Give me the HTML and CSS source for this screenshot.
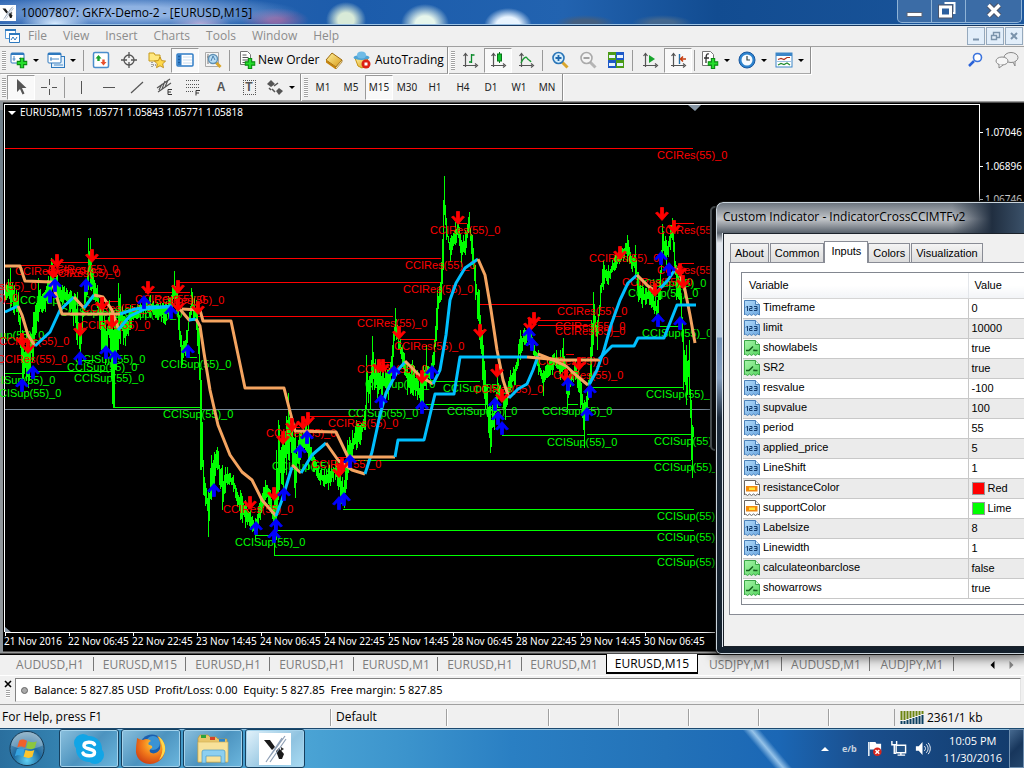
FILE: index.html
```html
<!DOCTYPE html>
<html lang="en">
<head>
<meta charset="utf-8">
<title>10007807: GKFX-Demo-2 - [EURUSD,M15]</title>
<link rel="stylesheet" href="styles.css">
</head>
<body>
<svg class="sprite" aria-hidden="true">
  <defs>
    <linearGradient id="gGold" x2="1" y2="1"><stop offset="0" stop-color="#fff2a0"/><stop offset="1" stop-color="#d89a16"/></linearGradient>
    <linearGradient id="gPage" x2="1" y2="1"><stop offset="0" stop-color="#b4dcfb"/><stop offset="1" stop-color="#6ba6df"/></linearGradient>
    <linearGradient id="gGreen" x2="1" y2="1"><stop offset="0" stop-color="#a9f5ab"/><stop offset="1" stop-color="#56d45f"/></linearGradient>
    <radialGradient id="gOrb" cx=".5" cy=".85" r=".8"><stop offset="0" stop-color="#5fd0f4"/><stop offset=".5" stop-color="#1c69a0"/><stop offset="1" stop-color="#6f9cb8"/></radialGradient>
    <radialGradient id="gFox" cx=".6" cy=".3" r=".8"><stop offset="0" stop-color="#ffcf3a"/><stop offset=".5" stop-color="#f27a1a"/><stop offset="1" stop-color="#c93612"/></radialGradient>
    <symbol id="plus" viewBox="0 0 10 10"><path d="M3.500.5h3v3h3v3h-3v3h-3v-3h-3v-3h3z" fill="#25dd2b" stroke="#0a8a12"/></symbol>
    <symbol id="newchart" viewBox="0 0 18 18"><rect x="1" y="2" width="13" height="10" rx="1" fill="#fff" stroke="#2e79be"/><path d="M1 3h13" stroke="#2e79be" stroke-width="2"/><path d="M4 5v5M2.500 8h3M9 8l1-1 2 1" stroke="#4a8cc8" fill="none"/><use href="#plus" x="6.500" y="6.500" width="11" height="11"/></symbol>
    <symbol id="profiles" viewBox="0 0 18 18"><rect x="4.500" y="5.500" width="13" height="11" fill="#e5f1fb" stroke="#2e79be"/><rect x="1" y="2" width="13" height="10" rx="1" fill="#fff" stroke="#2e79be"/><path d="M1 3h13" stroke="#2e79be" stroke-width="2"/><path d="M3 8h9M4 6v4M7 14h9" stroke="#4a8cc8"/></symbol>
    <symbol id="market" viewBox="0 0 18 18"><rect x="1.500" y="1.500" width="15" height="15" rx="1.500" fill="#fff" stroke="#4a8dcc" stroke-width="1.500"/><path d="M6.500 4l3 3.500H7.700v2.500H5.300V7.500H3.500z" fill="#18a22b"/><path d="M11.500 14.500l-3-3.500h1.800V8.500h2.400V11h1.800z" fill="#e8502c"/></symbol>
    <symbol id="target" viewBox="0 0 18 18"><circle cx="9" cy="9" r="5" fill="none" stroke="#555" stroke-width="1.300"/><path d="M9 1v6M9 11v6M1 9h6M11 9h6" stroke="#555" stroke-width="1.300"/></symbol>
    <symbol id="navigator" viewBox="0 0 18 18"><path d="M1 2h5l1 2h5v6H1z" fill="#ffe880" stroke="#c69a1a"/><path d="M4 11v5M5 14h3" stroke="#555" stroke-dasharray="1 1"/><path d="M12 6l1.700 3.600 3.900.5-2.900 2.700.8 3.900-3.500-1.900-3.500 1.900.8-3.900-2.900-2.700 3.900-.5z" fill="#ffd94a" stroke="#b8820a" stroke-width=".8"/></symbol>
    <symbol id="terminal" viewBox="0 0 18 18"><rect x="1" y="3" width="16" height="12" rx="1" fill="#fff" stroke="#2f7cc6" stroke-width="1.500"/><rect x="1.500" y="3.500" width="4" height="11" fill="#2f7cc6"/><path d="M3 5v9" stroke="#113b70" stroke-dasharray="1 2"/><path d="M7 6h9M7 9h9M7 12h9" stroke="#c8ddf0"/></symbol>
    <symbol id="tester" viewBox="0 0 18 18"><path d="M1.500 1.500h13v14h-13z" fill="#f4f4f4" stroke="#aaa"/><path d="M4 3v10M3 6h6" stroke="#777"/><path d="M11.500 11l5 5" stroke="#d9a62d" stroke-width="3"/><circle cx="9" cy="8" r="4.500" fill="#b9def5" stroke="#5f91b5" stroke-width="1.400"/><path d="M7 10l2-5 2 4" fill="none" stroke="#4a7fae"/></symbol>
    <symbol id="order" viewBox="0 0 18 18"><path d="M2.500.5h7l3 3v10h-10z" fill="#fff" stroke="#777"/><path d="M4.500 4h4M4.500 6.500h6M4.500 9h6M4.500 11.500h4" stroke="#555"/><use href="#plus" x="6.500" y="7" width="11" height="11"/></symbol>
    <symbol id="book" viewBox="0 0 18 18"><path d="M7 2l10 7-6 7L1 9z" fill="url(#gGold)" stroke="#9c6a10"/><path d="M1 9v2.500l10 7V16z" fill="#c4820c"/><path d="M11 16l6-7v2l-6 7" fill="#fff3c0" stroke="#9c6a10" stroke-width=".7"/></symbol>
    <symbol id="auto" viewBox="0 0 18 18"><path d="M2 7h13l-3 8-3 2-4-2z" fill="url(#gGold)" stroke="#c9940f"/><ellipse cx="8.500" cy="6.500" rx="8" ry="2.500" fill="#4da3d6"/><ellipse cx="8.500" cy="4" rx="4.500" ry="3.500" fill="#6fbbe6"/><circle cx="13" cy="13" r="4.500" fill="#dc1f12"/><rect x="11.500" y="11.500" width="3" height="3" fill="#fff"/></symbol>
    <symbol id="axes" viewBox="0 0 18 18"><path d="M4.500 3v13M2 14.500h13M2.500 5l2-2.500 2 2.500M14 12.500l2.500 2-2.500 2" fill="none" stroke="#555" stroke-width="1.200"/></symbol>
    <symbol id="bars" viewBox="0 0 18 18"><use href="#axes"/><path d="M10.500 3v9M10.500 4h3M8 11h2.500" stroke="#0a8a2a" stroke-width="1.300"/></symbol>
    <symbol id="candles" viewBox="0 0 18 18"><use href="#axes"/><path d="M10.500 1v11" stroke="#08741b"/><rect x="8.500" y="3" width="4" height="7" fill="#13c52e" stroke="#08741b"/></symbol>
    <symbol id="line" viewBox="0 0 18 18"><use href="#axes"/><path d="M4 12c2-5 5-7 6-5s3 2 4 4" fill="none" stroke="#1d9a35" stroke-width="1.300"/></symbol>
    <symbol id="zoomin" viewBox="0 0 18 18"><path d="M11 11l5.500 5.500" stroke="#d9a62d" stroke-width="3"/><circle cx="7.500" cy="7" r="5.500" fill="#d6eefc" stroke="#2b76b8" stroke-width="1.600"/><path d="M4.500 7h6M7.500 4v6" stroke="#2069ad" stroke-width="1.800"/></symbol>
    <symbol id="zoomout" viewBox="0 0 18 18"><path d="M11 11l5.500 5.500" stroke="#b5b5b5" stroke-width="3"/><circle cx="7.500" cy="7" r="5.500" fill="#f4f4f4" stroke="#aaa" stroke-width="1.600"/><path d="M4.500 7h6" stroke="#999" stroke-width="1.800"/></symbol>
    <symbol id="tile" viewBox="0 0 18 18"><path d="M1 1h8v8H1zM9 9h8v8H9z" fill="#4b9b18"/><path d="M9 1h8v8H9zM1 9h8v8H1z" fill="#1d59c8"/><path d="M2 4h6v3H2zM10 4h6v3h-6zM2 12h6v3H2zM10 12h6v3h-6z" fill="#e6f3ff"/></symbol>
    <symbol id="scroll" viewBox="0 0 18 18"><use href="#axes"/><path d="M8 4l6 4-6 4z" fill="#18a52d"/></symbol>
    <symbol id="shift" viewBox="0 0 18 18"><use href="#axes"/><path d="M10.500 3v10" stroke="#236ea7" stroke-width="1.400"/><path d="M17 8h-5M14 5.500L11.500 8l2.500 2.500" fill="none" stroke="#c63b0c" stroke-width="1.500"/></symbol>
    <symbol id="indicators" viewBox="0 0 18 18"><path d="M1.500.5h8l3 3v11h-11z" fill="#fff" stroke="#777"/><path d="M8 3c-3-1-3 2-3 9M3 7h5" fill="none" stroke="#333" stroke-width="1.300"/><use href="#plus" x="6.500" y="7" width="11" height="11"/></symbol>
    <symbol id="clock" viewBox="0 0 18 18"><circle cx="9" cy="9" r="8" fill="#2d84cf" stroke="#1a579e"/><circle cx="9" cy="9" r="5.500" fill="#f7fbff"/><path d="M9 5v4h3" fill="none" stroke="#344" stroke-width="1.200"/></symbol>
    <symbol id="template" viewBox="0 0 18 18"><rect x="1" y="2" width="16" height="14" fill="#fff" stroke="#3c86c8"/><path d="M1 3.500h16" stroke="#3c86c8" stroke-width="3"/><path d="M3 8.500l3-1 3 1 3-2h3" fill="none" stroke="#b1301b" stroke-width="1.200"/><path d="M2 10.500h14" stroke="#9cc0e0"/><path d="M3 14l3-1.500 3 1 3-1.500 3 2" fill="none" stroke="#1f8a2d" stroke-width="1.200"/></symbol>
    <symbol id="search" viewBox="0 0 18 18"><path d="M7 10l-5 5" stroke="#2a62d8" stroke-width="2.500"/><circle cx="10.500" cy="6.500" r="4" fill="#fff" stroke="#3b73dd" stroke-width="1.600"/></symbol>
    <symbol id="chat" viewBox="0 0 24 18"><ellipse cx="16" cy="6.500" rx="7" ry="5" fill="#eee" stroke="#888"/><path d="M18 11l2 4v-5" fill="#eee" stroke="#888"/><ellipse cx="7" cy="10" rx="6" ry="4" fill="#f6f6f6" stroke="#888"/><path d="M4 13v4l4-3" fill="#f6f6f6" stroke="#888"/></symbol>
    <symbol id="cursor" viewBox="0 0 18 18"><path d="M5 1v13l3-3 2.500 5.500 2-1L10 10h4.500z" fill="#555"/></symbol>
    <symbol id="cross" viewBox="0 0 18 18"><path d="M9.500 1v6M9.500 11v6M1 9.500h6M12 9.500h5" stroke="#555" stroke-width="1"/></symbol>
    <symbol id="vline" viewBox="0 0 18 18"><path d="M9.500 3v13" stroke="#555"/></symbol>
    <symbol id="hline" viewBox="0 0 18 18"><path d="M3 9.500h12" stroke="#555"/></symbol>
    <symbol id="trend" viewBox="0 0 18 18"><path d="M3 15L15 4" stroke="#555" stroke-width="1.200"/></symbol>
    <symbol id="channel" viewBox="0 0 18 18"><path d="M1 10L14 1M2 14L15 5M3 12l3-6M6 11l3-8M9 9l3-7" stroke="#555" stroke-width="1.200"/><path d="M16 11.500h-4v5h4M12 14h3" fill="none" stroke="#333"/></symbol>
    <symbol id="fibo" viewBox="0 0 18 18"><path d="M2 2.500h14M2 6.500h14M2 9.500h14M2 13.500h8" stroke="#555" stroke-dasharray="1 1"/><path d="M16 12.500h-4v5M12 15h3" fill="none" stroke="#333"/></symbol>
    <symbol id="objects" viewBox="0 0 18 18"><path d="M1 6l4-4 4 4-4 3zM10 13l3-3 4 3-4 4z" fill="#555"/><path d="M3 10l2 2M8 8l4-3M6 11l3 3" stroke="#555" fill="none" stroke-width="1.500"/></symbol>
    <symbol id="p-int" viewBox="0 0 16 16"><path d="M.5.5h11l4 4V15l-2-1-2 1.500-2-1.500-2 1.500L5.500 14l-2 1.500L1.500 14l-1 1z" fill="url(#gPage)" stroke="#4a80b8"/><path d="M11.500.5v4h4" fill="#dff0fd" stroke="#4a80b8"/><path d="M2 7.500L3.500 6v5M5.500 6.500H8v2H5.500v2H8.500M10 6.500h3v4h-3M10.500 8.500H13" fill="none" stroke="#153f70"/></symbol>
    <symbol id="p-bool" viewBox="0 0 16 16"><path d="M.5.5h11l4 4V15l-2-1-2 1.500-2-1.500-2 1.500L5.500 14l-2 1.500L1.500 14l-1 1z" fill="url(#gGreen)" stroke="#3aa546"/><path d="M11.500.5v4h4" fill="#d9fbd9" stroke="#3aa546"/><path d="M2 10.500h3l4-4M10 9.500v1h3.500" fill="none" stroke="#14601d" stroke-width="1.500"/></symbol>
    <symbol id="p-color" viewBox="0 0 16 16"><path d="M.5.500h11l4 4V15l-2-1-2 1.500-2-1.500-2 1.500L5.500 14l-2 1.500L1.500 14l-1 1z" fill="#fff" stroke="#666"/><path d="M11.500.5v4h4" fill="#eee" stroke="#666"/><rect x="2" y="6" width="11.500" height="5.500" fill="#f28a10"/><rect x="5" y="7.500" width="6" height="2.500" fill="#ffe53a"/></symbol>
    <symbol id="logo" viewBox="0 0 32 32"><path d="M0 0h32v32H0z" fill="#fff"/><path d="M5 7h6l5 7-3 3zM17 18l3-3 5 6-2 5h-3z" fill="#1b1b1b"/><path d="M26 3L9 26M23 5L7 29M27 6L11 29" stroke="#8fa0b6" stroke-width="1.200"/><path d="M22 14l3 2-3 2" fill="#333"/></symbol>
    <path id="down" d="M-1.500-6.500h3V1L4.500-2 6.500-1 0 6.500-6.500-1-4.500-2-1.500 1z" fill="#f00" stroke="#f00" stroke-width=".8"/>
    <path id="up" d="M-1.500 6.500h3V-1L4.500 2 6.500 1 0-6.500-6.500 1-4.500 2-1.500-1z" fill="#00f" stroke="#00f" stroke-width=".8"/>
  </defs>
</svg>

<div class="screen">
  <header class="titlebar">
    <svg class="i16"><use href="#logo"/></svg>
    <h1 class="title">10007807: GKFX-Demo-2 - [EURUSD,M15]</h1>
    <div class="winbtns">
      <button aria-label="Minimize"><svg viewBox="0 0 32 22"><rect x="8.500" y="12.500" width="15" height="4" fill="#fff" stroke="#5a6478"/></svg></button>
      <button aria-label="Restore"><svg viewBox="0 0 32 22"><path d="M12 3h10v10h-3" fill="none" stroke="#fff" stroke-width="2"/><path d="M8 7h10v9H8z" fill="none" stroke="#4b556a" stroke-width="5"/><path d="M8 7h10v9H8z" fill="#2b5f9f" stroke="#fff" stroke-width="3"/></svg></button>
      <button class="wclose" aria-label="Close"><svg viewBox="0 0 54 22"><path d="M22 5l11 11M33 5L22 16" stroke="#4b556a" stroke-width="5.500"/><path d="M22 5l11 11M33 5L22 16" stroke="#fff" stroke-width="3.500"/></svg></button>
    </div>
  </header>

  <nav class="menubar">
    <svg class="i16" viewBox="0 0 16 16"><path d="M1.500 1.500h10v9h-10z" fill="#fff" stroke="#5a9bd8"/><path d="M5.500 5.500h10v9h-10z" fill="#fff" stroke="#2e79be"/><path d="M1 2h11M5 6h11" stroke="#2e79be" stroke-width="2"/><path d="M7 12l2-3 2 3 2-3" fill="none" stroke="#2e79be"/></svg>
    <button>File</button><button>View</button><button>Insert</button><button>Charts</button><button>Tools</button><button>Window</button><button>Help</button>
    <div class="mdi">
      <button aria-label="Minimize chart"><svg viewBox="0 0 16 16"><path d="M5 11.500h6" stroke="#7b93ab" stroke-width="2"/></svg></button>
      <button aria-label="Restore chart"><svg viewBox="0 0 16 16"><path d="M6.500 7V4.500h6v5H10M4.500 7.500h5v4h-5z" fill="none" stroke="#7b93ab" stroke-width="1.400"/></svg></button>
      <button aria-label="Close chart"><svg viewBox="0 0 16 16"><path d="M5 5l6 6M11 5l-6 6" stroke="#7b93ab" stroke-width="2"/></svg></button>
    </div>
  </nav>

  <div class="toolrow">
    <div class="toolbar">
      <span class="grip"></span>
      <button class="drop" aria-label="New chart"><svg class="ico"><use href="#newchart"/></svg></button>
      <button class="drop" aria-label="Profiles"><svg class="ico"><use href="#profiles"/></svg></button>
      <span class="sep"></span>
      <button class="tb" aria-label="Market Watch"><svg class="ico"><use href="#market"/></svg></button>
      <button class="tb" aria-label="Data Window"><svg class="ico"><use href="#target"/></svg></button>
      <button class="tb" aria-label="Navigator"><svg class="ico"><use href="#navigator"/></svg></button>
      <button class="tb on" aria-label="Terminal"><svg class="ico"><use href="#terminal"/></svg></button>
      <button class="tb" aria-label="Strategy Tester"><svg class="ico"><use href="#tester"/></svg></button>
      <span class="sep"></span>
      <button class="wide neworder"><svg class="ico"><use href="#order"/></svg>New Order</button>
      <button class="tb" aria-label="MetaEditor"><svg class="ico"><use href="#book"/></svg></button>
      <button class="wide autotrade"><svg class="ico"><use href="#auto"/></svg>AutoTrading</button>
    </div>
    <div class="toolbar">
      <span class="grip"></span>
      <button class="tb" aria-label="Bar Chart"><svg class="ico"><use href="#bars"/></svg></button>
      <button class="tb on" aria-label="Candlesticks"><svg class="ico"><use href="#candles"/></svg></button>
      <button class="tb" aria-label="Line Chart"><svg class="ico"><use href="#line"/></svg></button>
      <span class="sep"></span>
      <button class="tb" aria-label="Zoom In"><svg class="ico"><use href="#zoomin"/></svg></button>
      <button class="tb" aria-label="Zoom Out"><svg class="ico"><use href="#zoomout"/></svg></button>
      <button class="tb" aria-label="Tile Windows"><svg class="ico"><use href="#tile"/></svg></button>
      <span class="sep"></span>
      <button class="tb" aria-label="Auto Scroll"><svg class="ico"><use href="#scroll"/></svg></button>
      <button class="tb on" aria-label="Chart Shift"><svg class="ico"><use href="#shift"/></svg></button>
      <span class="sep"></span>
      <button class="drop" aria-label="Indicators"><svg class="ico"><use href="#indicators"/></svg></button>
      <button class="drop" aria-label="Periods"><svg class="ico"><use href="#clock"/></svg></button>
      <button class="drop" aria-label="Templates"><svg class="ico"><use href="#template"/></svg></button>
    </div>
    <div class="rowend">
      <button class="tb" aria-label="Search"><svg class="ico"><use href="#search"/></svg></button>
      <button class="tb" aria-label="Messages"><svg class="ico chat"><use href="#chat"/></svg></button>
    </div>
  </div>

  <div class="toolrow compact">
    <div class="toolbar">
      <span class="grip"></span>
      <button class="tb on" aria-label="Cursor"><svg class="ico"><use href="#cursor"/></svg></button>
      <button class="tb" aria-label="Crosshair"><svg class="ico"><use href="#cross"/></svg></button>
      <span class="sep"></span>
      <button class="tb" aria-label="Vertical Line"><svg class="ico"><use href="#vline"/></svg></button>
      <button class="tb" aria-label="Horizontal Line"><svg class="ico"><use href="#hline"/></svg></button>
      <button class="tb" aria-label="Trendline"><svg class="ico"><use href="#trend"/></svg></button>
      <button class="tb" aria-label="Equidistant Channel"><svg class="ico"><use href="#channel"/></svg></button>
      <button class="tb" aria-label="Fibonacci"><svg class="ico"><use href="#fibo"/></svg></button>
      <button class="tb letter" aria-label="Text">A</button>
      <button class="tb letter" aria-label="Text Label"><span class="boxed">T</span></button>
      <button class="drop" aria-label="Arrows"><svg class="ico"><use href="#objects"/></svg></button>
    </div>
    <div class="toolbar">
      <span class="grip"></span>
      <button class="tb tf">M1</button><button class="tb tf">M5</button><button class="tb tf on">M15</button><button class="tb tf">M30</button><button class="tb tf">H1</button><button class="tb tf">H4</button><button class="tb tf">D1</button><button class="tb tf">W1</button><button class="tb tf">MN</button>
    </div>
  </div>

  <main class="work">
    <svg class="chart" id="chart" viewBox="0 101 1024 553" preserveAspectRatio="xMinYMin slice" role="img" aria-label="EURUSD M15 chart">
      <path d="M0 101h1024v553H0z"/>
      <path d="M0 101.500h1024M0 652.500h1024" stroke="#9a9a9a" stroke-width="2"/>
      <path d="M1.500 101v552" stroke="#8e9499" stroke-width="3"/>
      <path d="M1.500 110v255" stroke="#6f7f8a" stroke-width="3"/>
      <path d="M4.500 632V104.500h975V632.500H4.500" fill="none" stroke="#fff" shape-rendering="crispEdges"/>
      <path d="M5 627v5h6zM688 105h13l-6 6z" fill="#8796a5"/>
      <path d="M5 409.500h974" stroke="#778899"/>
      <g id="levels" fill="none" shape-rendering="crispEdges"></g>
      <path id="price" stroke="#0f0" fill="none" shape-rendering="crispEdges"/>
      <g id="marks"></g>
      <g id="averages" fill="none" stroke-width="3" stroke-linejoin="round"></g>
      <g id="arrows"></g>
      <g id="axis"></g>
      <path d="M8 111h8l-4 4z" fill="#fff"/>
      <text class="axis" x="20" y="116">EURUSD,M15&#160; 1.05771 1.05843 1.05771 1.05818</text>
    </svg>

    <div class="backwin"></div>
    <section class="dialog" role="dialog" aria-label="Custom Indicator">
      <h2 class="dtitle">Custom Indicator - IndicatorCrossCCIMTFv2</h2>
      <div class="client">
        <div class="dtabs" role="tablist">
          <button role="tab">About</button><button role="tab">Common</button><button role="tab" class="sel" aria-selected="true">Inputs</button><button role="tab">Colors</button><button role="tab">Visualization</button>
        </div>
        <div class="panel">
          <div class="list">
            <table class="params">
              <thead><tr><th class="pname">Variable</th><th>Value</th></tr></thead>
              <tbody>
                <tr><td><svg class="i16"><use href="#p-int"/></svg>Timeframe</td><td>0</td></tr>
                <tr><td><svg class="i16"><use href="#p-int"/></svg>limit</td><td>10000</td></tr>
                <tr><td><svg class="i16"><use href="#p-bool"/></svg>showlabels</td><td>true</td></tr>
                <tr><td><svg class="i16"><use href="#p-bool"/></svg>SR2</td><td>true</td></tr>
                <tr><td><svg class="i16"><use href="#p-int"/></svg>resvalue</td><td>-100</td></tr>
                <tr><td><svg class="i16"><use href="#p-int"/></svg>supvalue</td><td>100</td></tr>
                <tr><td><svg class="i16"><use href="#p-int"/></svg>period</td><td>55</td></tr>
                <tr><td><svg class="i16"><use href="#p-int"/></svg>applied_price</td><td>5</td></tr>
                <tr><td><svg class="i16"><use href="#p-int"/></svg>LineShift</td><td>1</td></tr>
                <tr><td><svg class="i16"><use href="#p-color"/></svg>resistanceColor</td><td><span class="swatch red"></span>Red</td></tr>
                <tr><td><svg class="i16"><use href="#p-color"/></svg>supportColor</td><td><span class="swatch lime"></span>Lime</td></tr>
                <tr><td><svg class="i16"><use href="#p-int"/></svg>Labelsize</td><td>8</td></tr>
                <tr><td><svg class="i16"><use href="#p-int"/></svg>Linewidth</td><td>1</td></tr>
                <tr><td><svg class="i16"><use href="#p-bool"/></svg>calculateonbarclose</td><td>false</td></tr>
                <tr><td><svg class="i16"><use href="#p-bool"/></svg>showarrows</td><td>true</td></tr>
              </tbody>
            </table>
          </div>
        </div>
      </div>
    </section>
  </main>

  <div class="charttabs" role="tablist">
    <button class="m" role="tab">AUDUSD,H1</button><button class="l" role="tab">EURUSD,M15</button><button role="tab">EURUSD,H1</button><button role="tab">EURUSD,H1</button><button role="tab">EURUSD,M1</button><button role="tab">EURUSD,H1</button><button class="last" role="tab">EURUSD,M1</button><button class="l active" role="tab" aria-selected="true">EURUSD,M15</button><button role="tab">USDJPY,M1</button><button class="m" role="tab">AUDUSD,M1</button><button role="tab">AUDJPY,M1</button>
    <div class="scrollers"><button aria-label="Scroll left"><svg viewBox="0 0 8 8"><path d="M6 0v8L2 4z" fill="#000"/></svg></button><button aria-label="Scroll right"><svg viewBox="0 0 8 8"><path d="M2 0v8l4-4z" fill="#888"/></svg></button></div>
  </div>

  <div class="account">
    <div class="handle"><svg viewBox="0 0 8 8"><path d="M1 1l6 6M7 1L1 7" stroke="#000" stroke-width="1.600"/></svg><span class="grip small"></span></div>
    <p class="balance"><i class="dot"></i>Balance: 5 827.85 USD&#160; Profit/Loss: 0.00&#160; Equity: 5 827.85&#160; Free margin: 5 827.85</p>
  </div>

  <footer class="status">
    <span class="s1">For Help, press F1</span><span class="s2">Default</span><span class="s3"></span><span class="s4"></span><span class="s4"></span><span class="s4"></span><span class="s4"></span>
    <span class="traffic"><svg viewBox="0 0 24 13"><path d="M1.500 0v9M4.500 0v9M7.500 0v8M10.500 0v7M13.500 0v6M16.500 0v5M19.500 0v4M22.500 0v3" stroke="#6c8512" stroke-width="2"/><path d="M1.500 10v3M4.500 10v3M7.500 9v4M10.500 8v5M13.500 7v6M16.500 6v7M19.500 5v8M22.500 4v9" stroke="#0b3f60" stroke-width="2"/></svg>2361/1 kb</span>
  </footer>

  <nav class="taskbar">
    <button class="start" aria-label="Start"><svg viewBox="0 0 40 40"><circle cx="20" cy="20" r="17.500" fill="url(#gOrb)" stroke="#16374f"/><path d="M4 17a16 14 0 0 1 32 0c-9 5-23 5-32 0z" fill="#fff" opacity=".25"/><path d="M12 12c3-2 5-1 8 0l-2 7c-3-1-5-2-8 0z" fill="#f0602a"/><path d="M21 12.500c3 1 6 2 9 0l-2 7c-3 2-6 1-9 0z" fill="#8cc63e"/><path d="M9.500 21c3-2 5-1 8 0l-2 7c-3-1-5-2-8 0z" fill="#36a3e0"/><path d="M18.500 21.500c3 1 6 2 9 0l-2 7c-3 2-6 1-9 0z" fill="#fdc52c"/></svg></button>
    <button class="task" aria-label="Skype"><svg viewBox="0 0 32 32"><rect x="1" y="1" width="18" height="18" rx="9" fill="#12a5e6"/><rect x="13" y="13" width="18" height="18" rx="9" fill="#12a5e6"/><circle cx="16" cy="16" r="13" fill="#12a5e6"/><path d="M21.500 11.500C20 8.500 11 8 11 12.500c0 4.500 10.500 2.500 10.500 7 0 4.500-10 4-11.500.5" fill="none" stroke="#fff" stroke-width="3.500" stroke-linecap="round"/></svg></button>
    <button class="task" aria-label="Firefox"><svg viewBox="0 0 32 32"><circle cx="17" cy="14" r="12.500" fill="#1b5fae"/><circle cx="18" cy="10" r="7" fill="#3a93d4"/><path d="M2 5c2 1 4 2 6 2 3-2 6-1 8 1-3 1-3 3-2 4 2 0 4 1 3 3-2 1-3 2-2 4 3 3 8 1 10-3 1-5 0-9-3-13 6 3 9 9 8 15-1 8-8 13-15 13C6 31 0 24 1 16c0-4 1-8 1-11z" fill="url(#gFox)"/><path d="M23 3c5 3 8 9 7 15-1 4-3 7-6 9 3-5 4-10 3-14s-2-7-4-10z" fill="#ffd84a"/></svg></button>
    <button class="task" aria-label="Explorer"><svg viewBox="0 0 32 32"><path d="M1 5l2-3h8l2 2h6l2 2h9v23H1z" fill="#e8c66a" stroke="#b9953c" stroke-width=".7"/><path d="M4 2h5v3H4z" fill="#2da33b"/><path d="M13 4h5v3h-5z" fill="#d64326"/><path d="M22 6h6v3h-6z" fill="#2d86cc"/><path d="M1 9h30v20H1z" fill="#f7e29a" stroke="#d3b257" stroke-width=".7"/><path d="M5 30V19q0-2 2-2h19q2 0 2 2v11h-4v-7H9v7z" fill="#8ccff0" stroke="#4c9ac4" stroke-width=".7"/></svg></button>
    <button class="task current" aria-label="MetaTrader"><svg><use href="#logo"/></svg></button>
    <div class="tray">
      <svg viewBox="0 0 12 12"><path d="M2 8l4-4 4 4z" fill="#fff"/></svg>
      <span class="lang">e/b</span>
      <svg class="t18" viewBox="0 0 18 18"><path d="M3 2v15" stroke="#fff" stroke-width="1.500"/><path d="M4 2h6l1 2h5v8h-6L9 10H4z" fill="#fff"/><circle cx="12" cy="12.500" r="4.500" fill="#d8251c"/><path d="M10 10.500l4 4M14 10.500l-4 4" stroke="#fff" stroke-width="1.500"/></svg>
      <svg class="t18" viewBox="0 0 18 18"><path d="M6.500 5.500h10v8h-10z" fill="#225287" stroke="#fff" stroke-width="1.500"/><path d="M8 16h8M11.500 13v3M2 1v4h5V1M4.500 5v9h2" fill="none" stroke="#fff" stroke-width="1.500"/></svg>
      <svg class="t18" viewBox="0 0 18 18"><path d="M2 6.500h3L9 2v14L5 11.500H2z" fill="#fff"/><path d="M11 6.500c1.500 1.500 1.500 3.500 0 5M13 4.500c2.500 2.500 2.500 6.500 0 9M15 3c3 4 3 8 0 12" fill="none" stroke="#fff"/></svg>
      <time class="clock">10:05 PM<br>11/30/2016</time>
      <button class="peek" aria-label="Show desktop"></button>
    </div>
  </nav>
</div>
<script src="chart.js"></script>
</body>
</html>
```
FILE: styles.css
```css
* { box-sizing: border-box; }
body { margin: 0; font: 12px/16px "Open Sans", "Noto Sans", sans-serif; color: #000; overflow: hidden; }
button { margin: 0; padding: 0; border: 0; background: none; font: inherit; color: inherit; }
h1, h2, p { margin: 0; font-size: 12px; font-weight: 400; }
svg { display: block; flex: none; }
.sprite { position: absolute; width: 0; height: 0; }
.i16 { width: 16px; height: 16px; }
.screen { height: 100vh; display: flex; flex-direction: column; background: #f0f0f0; }

.titlebar {
  flex: none; height: 26px; display: flex; align-items: center; gap: 5px; border-bottom: 1px solid #16365e;
  box-shadow: inset 0 -1px #9cc3e6; overflow: hidden;
  background:
    radial-gradient(ellipse 34px 14px at 55px 24px, #d9ecff, transparent),
    radial-gradient(ellipse 170px 18px at 130px 12px, #8fb2e2 30%, transparent),
    radial-gradient(ellipse 30px 12px at 200px 24px, #c9a6d0, transparent),
    radial-gradient(ellipse 34px 12px at 275px 20px, #8a6aa8 20%, transparent),
    radial-gradient(ellipse 20px 18px at 346px 20px, #d8ead8 40%, transparent),
    radial-gradient(ellipse 24px 20px at 425px 24px, #e6f6ec 40%, transparent),
    radial-gradient(ellipse 24px 18px at 508px 26px, #e8f4ff 50%, transparent),
    radial-gradient(ellipse 30px 8px at 585px 23px, #445f80 40%, transparent),
    radial-gradient(ellipse 30px 8px at 662px 23px, #44688f 40%, transparent),
    linear-gradient(90deg, #2f66b2, #1c5cab 35%, #2263b0 55%, #124c91 70%, #1b569c);
}
.winbtns { margin-left: auto; align-self: flex-start; display: flex; margin-right: 2px; border: 1px solid #8fb3d6; border-top: 0; border-radius: 0 0 5px 5px; background: #3b6ca6; }
.winbtns button { width: 34px; height: 22px; border-right: 1px solid #8fb3d6; }
.winbtns svg { width: 100%; height: 22px; }
.winbtns .wclose { width: 55px; border: 0; }

.menubar { flex: none; height: 21px; display: flex; align-items: center; padding-left: 4px; color: #8c8c8c; border-bottom: 1px solid #a0a0a0; }
.menubar > button { padding: 0 8px; }
.mdi { margin-left: auto; display: flex; gap: 1px; padding-right: 1px; }
.mdi button { width: 18px; height: 18px; border: 1px solid #95a9bd; background: #e2eefa; }

.toolrow { flex: none; height: 27px; display: flex; }
.toolbar { display: flex; align-items: center; border-right: 1px solid #8e8e8e; border-bottom: 1px solid #a8a8a8; padding-right: 1px; margin-right: 1px; box-shadow: 1px 1px #fff; }
.grip { width: 4px; height: 19px; margin: 0 1px 0 2px; background: repeating-linear-gradient(#a2a2a2 0 1px, #fff 1px 2px); }
.grip.small { height: 8px; }
.sep { width: 1px; height: 21px; margin: 0 3px 0 2px; background: #999; }
.tb, .drop { height: 25px; display: flex; align-items: center; justify-content: center; }
.tb { width: 28px; }
.drop { width: 37px; justify-content: flex-start; padding-left: 3px; gap: 5px; }
.drop::after { content: ""; border: 3px solid transparent; border-top: 3px solid #000; border-bottom: 0; }
.compact .sep { margin: 0 2px 0 1px; }
.compact .drop { width: 36px; }
.on { border: 1px solid #999; border-right-color: #fff; border-bottom-color: #fff; background: #f9f9f9; }
.ico { width: 18px; height: 18px; }
.ico.chat { width: 24px; }
.wide { display: flex; align-items: center; height: 25px; gap: 2px; white-space: nowrap; }
.neworder { width: 87px; padding-left: 5px; }
.autotrade { width: 98px; padding-left: 5px; gap: 4px; }
.rowend { margin-left: auto; display: flex; gap: 3px; padding-right: 3px; }
.letter { font: bold 12px/16px "Liberation Sans", sans-serif; color: #555; }
.boxed { width: 13px; line-height: 13px; border: 1px dotted #555; }
.tf { font: 10px/14px "Noto Sans", sans-serif; color: #222; }

.work { position: relative; flex: 1; min-height: 0; }
.chart { width: 100%; height: 100%; background: #000; }
.axis { font: 10px "Noto Sans", sans-serif; fill: #fff; }
.mark { font: 11px "Liberation Sans", sans-serif; }
.mark.res { fill: #f00; }
.mark.sup { fill: #0f0; }

.backwin { position: absolute; top: 105px; right: 300px; width: 14px; height: 245px; border: 2px solid #5d6468; border-radius: 5px; background: #0c1014; }
.dialog {
  position: absolute; top: 101px; right: 0; bottom: 0; width: 308px; padding: 0 0 6px 6px;
  border: 1px solid #c9d4dc; border-right: 0; border-radius: 7px 0 0 5px; outline: 1px solid #111;
  box-shadow: 0 0 12px 4px rgba(0, 0, 0, .6); display: flex; flex-direction: column; z-index: 2;
  background:
    linear-gradient(90deg, transparent 235px, #202e40 275px, #3a5068) top / 100% 30px no-repeat,
    linear-gradient(#6d7680, #c3c6ca 16px, #59626c 30px, #e4e8ee 40px, #b9cbe0 134px, #7998bd 135px, #86a0bf 175px, #1d2b3c 215px, #14202c);
}
.dtitle { height: 30px; line-height: 28px; flex: none; white-space: nowrap; }
.client { flex: 1; border: 1px solid #1b222a; border-right: 0; box-shadow: -1px 0 #dfe6ee; background: #f0f0f0; padding: 7px 0 0 5px; font: 11px/14px "Liberation Sans", sans-serif; }
.dtabs { display: flex; align-items: flex-end; padding-left: 1px; height: 21px; position: relative; }
.dtabs button { height: 19px; border: 1px solid #898c95; border-bottom: 0; margin-right: 1px; padding: 0 4px; background: linear-gradient(#f4f4f4, #dcdcdc); }
.dtabs .sel { height: 22px; margin: 0 0 -1px -1px; padding: 0 6px 3px; background: #fff; }
.panel { height: 353px; border: 1px solid #898c95; border-right: 0; background: #fff; padding: 9px 0 9px 11px; }
.list { height: 100%; border: 1px solid #828790; border-right: 0; padding-left: 1px; }
.params { border-collapse: collapse; width: 100%; table-layout: fixed; }
.params th { height: 25px; padding: 0 0 0 6px; text-align: left; font-weight: 400; background: linear-gradient(#fff 50%, #f2f4f7); border-bottom: 1px solid #d5d5d5; }
.params th + th { border-left: 1px solid #e3e6ea; }
.params .pname { width: 225px; }
.params td { height: 20px; padding: 0 0 0 3px; border-bottom: 1px solid #c8c8c8; white-space: nowrap; }
.params td + td { border-left: 1px solid #c8c8c8; }
.params tr:nth-child(even) td { background: #ebebeb; }
.params td:first-child { padding-left: 1px; }
.params td svg { display: inline-block; vertical-align: middle; margin-right: 3px; }
.swatch { display: inline-block; width: 13px; height: 13px; border: 1px solid #999; vertical-align: middle; margin-right: 3px; }
.red { background: #f00; }
.lime { background: #0f0; }

.charttabs { flex: none; height: 22px; display: flex; padding-left: 6px; color: #7d7d7d; background: linear-gradient(#000, #000) top / 100% 1px no-repeat, #f0f0f0; border-bottom: 1px solid #fff; }
.charttabs > button { width: 84px; height: 20px; padding: 2px 0 0; white-space: nowrap; background: linear-gradient(#777, #777) right center / 1px 14px no-repeat; }
.charttabs > .m { width: 88px; }
.charttabs > .l { width: 92px; }
.charttabs > .last { background: none; }
.charttabs > .active { background: #fff; color: #000; border: 1px solid #000; border-top: 0; border-bottom-width: 2px; }
.scrollers { margin-left: auto; display: flex; gap: 10px; align-items: center; padding-right: 8px; }
.scrollers svg { width: 9px; height: 8px; }

.account { flex: none; height: 29px; display: flex; padding: 2px 3px 2px 0; border-bottom: 1px solid #a0a0a0; }
.handle { width: 15px; display: flex; flex-direction: column; align-items: center; gap: 2px; padding-top: 2px; }
.handle svg { width: 8px; height: 8px; }
.balance { flex: 1; display: flex; align-items: center; gap: 6px; border: 1px solid #828282; border-right-color: #e3e3e3; border-bottom-color: #e3e3e3; background: #fff; padding-left: 5px; font: 11px/16px "Noto Sans", sans-serif; }
.dot { width: 7px; height: 7px; border-radius: 50%; background: #aaa; border: 1px solid #666; }

.status { flex: none; height: 23px; display: flex; align-items: center; padding: 2px 0 0 2px; }
.status span { height: 17px; border-right: 1px solid #a0a0a0; box-shadow: 1px 0 #fff; white-space: nowrap; }
.status .s1 { width: 329px; }
.status .s2 { width: 116px; padding-left: 5px; }
.status .s3 { width: 102px; }
.status .s4 { width: 70px; }
.status .traffic { margin-left: auto; width: 130px; padding-left: 5px; display: flex; align-items: center; gap: 3px; border-right: 0; border-left: 1px solid #a0a0a0; box-shadow: none; }
.traffic svg { width: 24px; height: 13px; }

.taskbar {
  flex: none; height: 40px; display: flex; align-items: stretch; gap: 2px; border-top: 1px solid #1c4a70; box-shadow: inset 0 1px #8fc0e0;
  background:
    linear-gradient(50deg, transparent 42%, rgba(190, 225, 250, .75) 50%, transparent 58%) 77% 0 / 80px 100% no-repeat,
    linear-gradient(90deg, #2a6f9e, #3f96c4 12%, #4aa3d4 30%, #3b93cc 40%, #2a7fc3 50%, #2372b8 65%, #1b67b5 76%, #1a4f8e 84%, #123a6a);
}
.start { width: 57px; padding-left: 7px; }
.start svg { width: 40px; height: 39px; }
.task { width: 60px; height: 39px; display: flex; justify-content: center; align-items: center; border: 1px solid #16405f; border-radius: 3px; box-shadow: inset 0 0 0 1px #a4d3ec; background: linear-gradient(135deg, #8bc0dd, #4c93bf 50%, #6cb7de); }
.task.current { background: linear-gradient(135deg, #e4f3fb, #8fc3e0 60%, #a9dcf4); }
.task svg { width: 32px; height: 32px; }
.tray { margin-left: auto; display: flex; align-items: center; color: #fff; gap: 7px; }
.tray > svg { width: 12px; height: 12px; }
.tray > .t18 { width: 17px; height: 17px; }
.lang { font: bold 9px/12px "Open Sans", sans-serif; color: #c6d2df; padding: 0 2px 0 4px; }
.clock { text-align: center; padding: 1px 0 0 6px; font-size: 11px; line-height: 17px; }
.peek { width: 15px; align-self: stretch; border: 1px solid #6f8fb0; background: linear-gradient(135deg, #46698f, #17365c 50%, #24466c); }
```
FILE: chart.js
```js
(function () {
  var NS = 'http://www.w3.org/2000/svg';
  var RED = '#f00', LIME = '#0f0', SKY = '#00bfff', SAND = '#f4a460';

  function add(parent, tag, attrs, text) {
    var el = document.createElementNS(NS, tag);
    for (var k in attrs) el.setAttribute(k, attrs[k]);
    if (text) el.textContent = text;
    document.getElementById(parent).appendChild(el);
  }

  // x, high, low
  var range = [
    5,285,300, 10,268,308, 14,285,315, 18,292,322, 22,330,385, 28,335,388, 33,312,360, 38,278,322, 45,290,312, 51,258,298, 56,272,300,
    62,285,305, 70,290,312, 77,292,345, 80,325,362, 84,285,310, 87,270,295, 88,238,290, 90,238,290, 93,272,300, 97,285,308, 101,300,350,
    105,320,365, 109,300,338, 112,315,404, 114,320,407, 116,320,370, 118,283,350, 125,318,346, 130,305,330, 140,300,320, 150,295,318,
    165,302,325, 172,285,310, 174,271,300, 178,300,330, 181,335,368, 186,330,355, 191,288,315, 196,300,330, 199,330,380, 201,380,470,
    203,460,495, 208,490,537, 211,455,500, 217,447,470, 222,465,510, 227,467,485, 233,475,492, 240,490,520, 245,500,528, 250,510,530,
    255,518,540, 260,495,520, 265,480,500, 270,490,510, 274,500,550, 276,450,540, 278,420,500, 283,430,500, 288,393,460, 292,420,470,
    295,430,498, 300,430,460, 305,425,450, 308,420,470, 313,455,472, 320,470,485, 328,465,490, 335,460,480, 340,470,505, 344,480,508,
    347,440,480, 352,430,460, 356,420,450, 360,425,445, 365,405,430, 366,355,410, 370,375,410, 372,336,390, 377,360,400, 382,365,395,
    388,370,400, 392,345,375, 395,308,335, 398,330,350, 402,345,365, 407,365,395, 412,360,395, 417,370,400, 420,380,410, 423,365,405,
    426,345,390, 430,370,385, 434,340,365, 437,290,330, 441,262,300, 443,200,270, 444,176,215, 446,218,240, 450,238,262, 455,222,245,
    458,220,238, 461,240,267, 465,230,255, 469,212,232, 472,235,265, 475,265,300, 479,290,340, 482,330,380, 485,370,410, 490,405,453,
    494,400,430, 497,375,408, 500,385,400, 505,395,420, 510,370,390, 515,365,385, 520,330,360, 524,328,345, 530,330,348, 533,340,355,
    538,350,375, 543,370,396, 547,360,378, 552,355,375, 556,350,368, 560,350,380, 563,338,370, 567,370,412, 571,370,385, 575,360,380,
    580,375,408, 584,400,448, 588,380,400, 591,320,380, 593,292,345, 597,320,350, 600,285,310, 603,260,290, 608,265,285, 615,255,270,
    620,248,262, 627,235,262, 632,255,272, 635,245,275, 638,272,302, 642,285,308, 650,288,305, 657,300,325, 660,270,300, 662,224,260,
    666,240,265, 670,225,250, 672,218,240, 676,265,300, 680,275,305, 683,330,390, 686,345,405, 689,340,395, 691,400,460, 692,425,478, 694,402,422
  ];
  var d = '', seed = 7;
  function rnd() { seed = (seed * 16807) % 2147483647; return seed / 2147483647; }
  for (var i = 0; i + 3 < range.length; i += 3) {
    var x0 = range[i], x1 = range[i + 3];
    for (var x = x0; x < x1; x++) {
      var t = (x - x0) / (x1 - x0);
      var hi = range[i + 1] + (range[i + 4] - range[i + 1]) * t;
      var lo = range[i + 2] + (range[i + 5] - range[i + 2]) * t;
      var h = lo - hi, j = t ? 1 : 0;
      d += 'M' + (x + 0.5) + ' ' + Math.round(hi + rnd() * h * 0.4 * j) + 'V' + Math.round(lo - rnd() * h * 0.4 * j);
    }
  }
  d += 'M274.500 535V555M113.500 330V407M200.500 409V470';
  document.getElementById('price').setAttribute('d', d);

  // y, from, to
  [[148,5,693],[265,5,52],[262,56,90],[258,92,441],[282,177,440],[292,145,190],[301,100,118],[316,198,393],[339,400,435],[362,380,392],
   [416,308,365],[223,458,467],[304,479,593],[320,532,591],[325,538,590],[354,566,574],[334,22,34],[457,338,348],[223,675,694],[263,681,694],[427,292,300]]
    .forEach(function (l) { add('levels', 'path', { stroke: RED, d: 'M' + l[1] + ' ' + (l[0] + 0.5) + 'H' + l[2] }); });
  [[373,5,22],[371,33,113],[407,113,200],[357,188,197],[360,80,95],[381,432,480],[404,424,485],[435,502,584],[434,587,691],[387,592,683],
   [460,350,691],[509,343,694],[530,275,694],[555,274,694],[535,256,274],[326,658,680],[404,568,578]]
    .forEach(function (l) { add('levels', 'path', { stroke: LIME, d: 'M' + l[1] + ' ' + (l[0] + 0.5) + 'H' + l[2] }); });

  [[20,300],[60,312],[112,314],[75,359],[67,367],[74,378],[161,364],[163,414],[-15,380],[-9,393],[-26,335],[272,466],[235,542],[348,413],
   [365,384],[443,388],[447,411],[542,411],[547,442],[636,283],[628,293],[642,333],[646,394],[654,441],[654,467],[657,516],[657,537],[657,562]]
    .forEach(function (p) { add('marks', 'text', { 'class': 'mark sup', x: p[0], y: p[1] + 4 }, 'CCISup(55)_0'); });
  [[657,155],[430,230],[405,265],[403,289],[357,323],[394,346],[357,369],[328,423],[266,433],[223,509],[311,464],[557,311],[555,326],[555,331],
   [538,361],[553,375],[473,389],[589,258],[622,282],[657,230],[657,270],[15,271],[48,269],[50,273],[82,308],[80,325],[-1,341],[-3,359],
   [-34,286],[-52,298],[135,299],[154,300]]
    .forEach(function (p) { add('marks', 'text', { 'class': 'mark res', x: p[0], y: p[1] + 4 }, 'CCIRes(55)_0'); });

  [[SKY,'5,312 18,306'],[SAND,'18,306 22,315 28,335 35,346'],[SKY,'35,346 50,332 60,310 74,297'],[SAND,'74,297 84,308'],[SKY,'84,308 94,295'],
   [SAND,'94,295 103,297 112,310 118,328'],[SKY,'118,330 130,316 145,309 172,306'],[SAND,'178,307 190,321'],[SKY,'189,320 196,319'],
   [SAND,'196,319 200,326 204,353 210,390 218,425 230,455 242,472 252,480 262,500 276,516'],[SKY,'276,516 282,500 292,467'],[SAND,'292,465 301,473'],
   [SKY,'301,473 312,455 326,443'],[SAND,'326,443 338,460 352,470 365,474'],[SKY,'365,474 372,452 380,415 386,393 398,370 405,362'],
   [SAND,'405,361 420,376 433,384'],[SKY,'433,384 440,370 446,335 450,300 456,283 465,268 478,259'],
   [SAND,'478,259 485,275 491,310 497,350 503,380 509,398'],[SKY,'509,398 518,389 527,384 533,370 538,356'],
   [SAND,'538,354 553,360 566,366 577,376 588,385'],[SKY,'589,385 597,370 604,350 611,325 620,300 628,283 637,275'],
   [SAND,'637,275 648,286 657,292'],[SKY,'657,292 668,280 676,268'],[SAND,'678,268 685,290 690,315 695,343'],
   [SAND,'5,266 20,266 25,281 52,282 62,314 120,314'],[SKY,'120,314 135,309 150,307 172,307'],
   [SAND,'182,309 200,310 203,321 231,321 245,388 284,388 295,431 336,432 348,457 395,457'],
   [SKY,'395,457 398,440 424,440 435,394 454,394 460,357 527,357'],[SAND,'527,357 560,360 600,360'],
   [SKY,'599,359 612,346 634,346 638,338 664,338 677,305 696,305']]
    .forEach(function (a) { add('averages', 'polyline', { stroke: a[0], points: a[1] }); });

  [[57,261],[53,272],[92,256],[148,288],[178,287],[178,305],[198,308],[102,304],[112,322],[80,330],[28,347],[22,340],[250,503],[274,494],
   [283,438],[292,425],[303,423],[308,419],[342,465],[339,471],[379,366],[383,366],[399,333],[422,377],[458,218],[480,331],[497,371],
   [502,396],[530,325],[534,319],[579,364],[566,376],[620,253],[655,290],[662,214],[674,227],[680,270],[683,282]]
    .forEach(function (p) { add('arrows', 'use', { href: '#down', x: p[0], y: p[1] }); });
  [[55,285],[50,296],[86,285],[33,372],[22,385],[80,358],[106,352],[115,357],[144,302],[171,312],[188,351],[214,490],[256,528],[276,525],
   [274,536],[284,494],[300,451],[307,437],[339,503],[344,499],[350,461],[381,401],[394,372],[422,407],[432,372],[495,404],[498,418],
   [502,428],[529,334],[532,344],[568,384],[587,414],[590,391],[661,258],[669,269],[658,320],[680,323]]
    .forEach(function (p) { add('arrows', 'use', { href: '#up', x: p[0], y: p[1] }); });

  ['21 Nov 2016','22 Nov 06:45','22 Nov 22:45','23 Nov 14:45','24 Nov 06:45','24 Nov 22:45','25 Nov 14:45','28 Nov 06:45','28 Nov 22:45','29 Nov 14:45','30 Nov 06:45']
    .forEach(function (s, n) {
      add('axis', 'text', { 'class': 'axis', x: 4 + 64 * n, y: 645 }, s);
      add('axis', 'path', { stroke: '#fff', d: 'M' + (5.5 + 64 * n) + ' 633v3' });
    });
  ['1.07046','1.06896','1.06746'].forEach(function (s, n) {
    var y = Math.round(132 + 33.5 * n);
    add('axis', 'text', { 'class': 'axis', x: 985, y: y + 4 }, s);
    add('axis', 'path', { stroke: '#fff', d: 'M980 ' + (y + 0.5) + 'h3' });
  });
})();
```
